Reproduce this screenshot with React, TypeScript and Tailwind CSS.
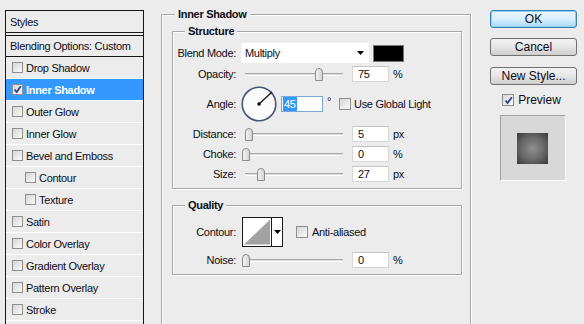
import type { ReactNode } from 'react';

const styleRows = [
  { label: 'Drop Shadow' },
  { label: 'Inner Shadow', checked: true, active: true },
  { label: 'Outer Glow' },
  { label: 'Inner Glow' },
  { label: 'Bevel and Emboss' },
  { label: 'Contour', indent: true },
  { label: 'Texture', indent: true },
  { label: 'Satin' },
  { label: 'Color Overlay' },
  { label: 'Gradient Overlay' },
  { label: 'Pattern Overlay' },
  { label: 'Stroke' },
];

function Check({ checked, size = 11 }: { checked?: boolean; size?: number }) {
  return (
    <span
      className="shrink-0 flex items-center justify-center border border-[#8e8f8f] bg-gradient-to-br from-[#d6d6d6] to-[#fafafa]"
      style={{ width: size, height: size }}
    >
      {checked && (
        <svg width="9" height="9" viewBox="0 0 9 9">
          <path d="M1.5 4.5 L3.6 7 L7.8 1.2" fill="none" stroke="#2b3f8f" strokeWidth="1.8" />
        </svg>
      )}
    </span>
  );
}

function Slider({ thumb }: { thumb: number }) {
  return (
    <div className="relative w-[104px] h-[16px] shrink-0">
      <div className="absolute left-[4px] top-[7px] w-[98px] h-[3px] border-t border-t-[#a9a9a9] border-b border-b-white bg-[#dcdcdc]" />
      <svg className="absolute top-[2px]" style={{ left: thumb - 5 }} width="10" height="14" viewBox="0 0 10 14">
        <defs>
          <linearGradient id="th" x1="0" y1="0" x2="1" y2="0">
            <stop offset="0" stopColor="#f4f4f4" />
            <stop offset="1" stopColor="#d2d2d2" />
          </linearGradient>
        </defs>
        <path d="M1.5 4 Q1.5 0.5 5 0.5 Q8.5 0.5 8.5 4 L8.5 12.5 L1.5 12.5 Z" fill="url(#th)" stroke="#8a8a8a" />
      </svg>
    </div>
  );
}

function NumBox({ value, w = 37 }: { value: string; w?: number }) {
  return (
    <div
      className="h-[16px] bg-white border border-[#d6d6d6] border-t-[#c4c4c4] flex items-center pl-[5px] shrink-0"
      style={{ width: w }}
    >
      {value}
    </div>
  );
}

function Label({ children }: { children: ReactNode }) {
  return <div className="w-[63px] text-right shrink-0 mr-[5px]">{children}</div>;
}

function SliderRow({ label, thumb, value, unit }: { label: string; thumb: number; value: string; unit: string }) {
  return (
    <div className="flex items-center h-[16px]">
      <Label>{label}</Label>
      <Slider thumb={thumb} />
      <div className="ml-[7px]">
        <NumBox value={value} />
      </div>
      <span className="ml-[4px]">{unit}</span>
    </div>
  );
}

function Group({ title, left, className, children }: { title: string; left: number; className?: string; children: ReactNode }) {
  return (
    <div className={`relative border border-[#a8a8a8] shadow-[inset_1px_1px_0_#fff,1px_1px_0_#fff] ${className ?? ''}`}>
      <span
        className="absolute top-[-8px] h-[14px] leading-[14px] px-[3px] bg-[#ececec] font-bold"
        style={{ left }}
      >
        {title}
      </span>
      {children}
    </div>
  );
}

function Dial() {
  return (
    <svg width="36" height="36" viewBox="0 0 36 36" className="shrink-0">
      <circle cx="18" cy="18" r="16.8" fill="#fbfbfb" stroke="#4a5275" strokeWidth="1.6" />
      <line x1="18" y1="18" x2="31" y2="6" stroke="#111" strokeWidth="1.2" />
      <rect x="16.5" y="16.5" width="3" height="3" fill="#000" />
    </svg>
  );
}

function ContourBox() {
  return (
    <div className="w-[41px] h-[30px] border border-[#1a1a1a] bg-white flex shrink-0">
      <svg width="29" height="28" viewBox="0 0 29 28" className="border-r border-[#1a1a1a]">
        <path d="M1 27 L28 1 L28 27 Z" fill="#a2a2a2" />
      </svg>
      <div className="flex-1 flex items-center justify-center">
        <svg width="7" height="4" viewBox="0 0 7 4">
          <path d="M0 0 L7 0 L3.5 4 Z" fill="#000" />
        </svg>
      </div>
    </div>
  );
}

function Button({ children, primary }: { children: ReactNode; primary?: boolean }) {
  return (
    <div
      className={`w-[87px] h-[18px] rounded-[3px] border flex items-center justify-center text-[12px] leading-none ${
        primary
          ? 'border-[#3c7fb1] bg-gradient-to-b from-[#eaf6fd] via-[#d9f0fc] to-[#a7d9f5] shadow-[inset_0_0_0_1px_#8ad2f5]'
          : 'border-[#707070] bg-gradient-to-b from-[#f2f2f2] via-[#e6e6e6] to-[#cfcfcf]'
      }`}
    >
      {children}
    </div>
  );
}

export default function App() {
  return (
    <div className="w-[584px] h-[324px] overflow-hidden bg-[#ececec] flex items-start text-[11px] tracking-[-0.3px] text-[#0c0c18] font-['Liberation_Sans',Arial,sans-serif] leading-[14px]">
      {/* styles list */}
      <div className="ml-[5px] mt-[10px] w-[139px] h-[330px] border border-[#161616] shrink-0">
        <div className="h-[22px] border-b border-[#161616] flex items-center pl-[4px]">Styles</div>
        <div className="h-[2px]" />
        <div className="h-[22px] border-y border-[#161616] flex items-center pl-[4px]">Blending Options: Custom</div>
        {styleRows.map((r) => (
          <div
            key={r.label}
            className={`h-[22px] border-b border-white flex items-center gap-[3px] ${r.indent ? 'pl-[19px]' : 'pl-[6px]'} ${
              r.active ? 'bg-[#3399ff] text-white font-bold' : ''
            }`}
          >
            <Check checked={r.checked} />
            <span>{r.label}</span>
          </div>
        ))}
      </div>

      {/* inner shadow panel */}
      <Group title="Inner Shadow" left={13} className="ml-[17px] mt-[14px] w-[310px] h-[330px] shrink-0 pl-[10px] pt-[16px]">
        <Group title="Structure" left={12} className="w-[290px] pt-[11px] pb-[6px]">
          <div className="flex items-center h-[20px]">
            <Label>Blend Mode:</Label>
            <div className="w-[128px] h-[20px] bg-white flex items-center justify-between pl-[4px] pr-[5px]">
              <span>Multiply</span>
              <svg width="7" height="4" viewBox="0 0 7 4">
                <path d="M0 0 L7 0 L3.5 4 Z" fill="#000" />
              </svg>
            </div>
            <div className="ml-[4px] w-[31px] h-[17px] bg-black border border-[#777]" />
          </div>
          <div className="mt-[3px]">
            <SliderRow label="Opacity:" thumb={78} value="75" unit="%" />
          </div>
          <div className="mt-[4px] flex items-center h-[36px]">
            <Label>Angle:</Label>
            <Dial />
            <div className="ml-[4px] w-[42px] h-[16px] bg-white border border-[#7aa7d6] flex items-center pl-[1px]">
              <span className="bg-[#3399ff] text-white px-[1px]">45</span>
            </div>
            <span className="w-[16px] pl-[4px] self-start mt-[8px]">°</span>
            <Check size={12} />
            <span className="ml-[3px]">Use Global Light</span>
          </div>
          <div className="mt-[4px]">
            <SliderRow label="Distance:" thumb={8} value="5" unit="px" />
          </div>
          <div className="mt-[4px]">
            <SliderRow label="Choke:" thumb={5} value="0" unit="%" />
          </div>
          <div className="mt-[4px]">
            <SliderRow label="Size:" thumb={20} value="27" unit="px" />
          </div>
        </Group>

        <Group title="Quality" left={12} className="mt-[16px] w-[290px] pt-[11px] pb-[6px]">
          <div className="flex items-center h-[30px]">
            <Label>Contour:</Label>
            <div className="ml-[1px]">
              <ContourBox />
            </div>
            <div className="ml-[13px]">
              <Check size={12} />
            </div>
            <span className="ml-[4px]">Anti-aliased</span>
          </div>
          <div className="mt-[5px]">
            <SliderRow label="Noise:" thumb={5} value="0" unit="%" />
          </div>
        </Group>
      </Group>

      {/* buttons + preview */}
      <div className="ml-[19px] mt-[10px] w-[87px] flex flex-col items-center shrink-0 tracking-normal">
        <Button primary>OK</Button>
        <div className="mt-[10px]">
          <Button>Cancel</Button>
        </div>
        <div className="mt-[11px]">
          <Button>New Style...</Button>
        </div>
        <div className="mt-[8px] flex items-center gap-[4px] text-[12px] -ml-[4px]">
          <Check checked size={12} />
          <span>Preview</span>
        </div>
        <div className="mt-[8px] -ml-[2px] w-[66px] h-[66px] bg-[#d8d8d8] border border-t-[#a0a0a0] border-l-[#a0a0a0] border-r-white border-b-white flex items-center justify-center">
          <div className="w-[31px] h-[31px] bg-[radial-gradient(circle,#909090_0%,#666_55%,#383838_100%)]" />
        </div>
      </div>
    </div>
  );
}
